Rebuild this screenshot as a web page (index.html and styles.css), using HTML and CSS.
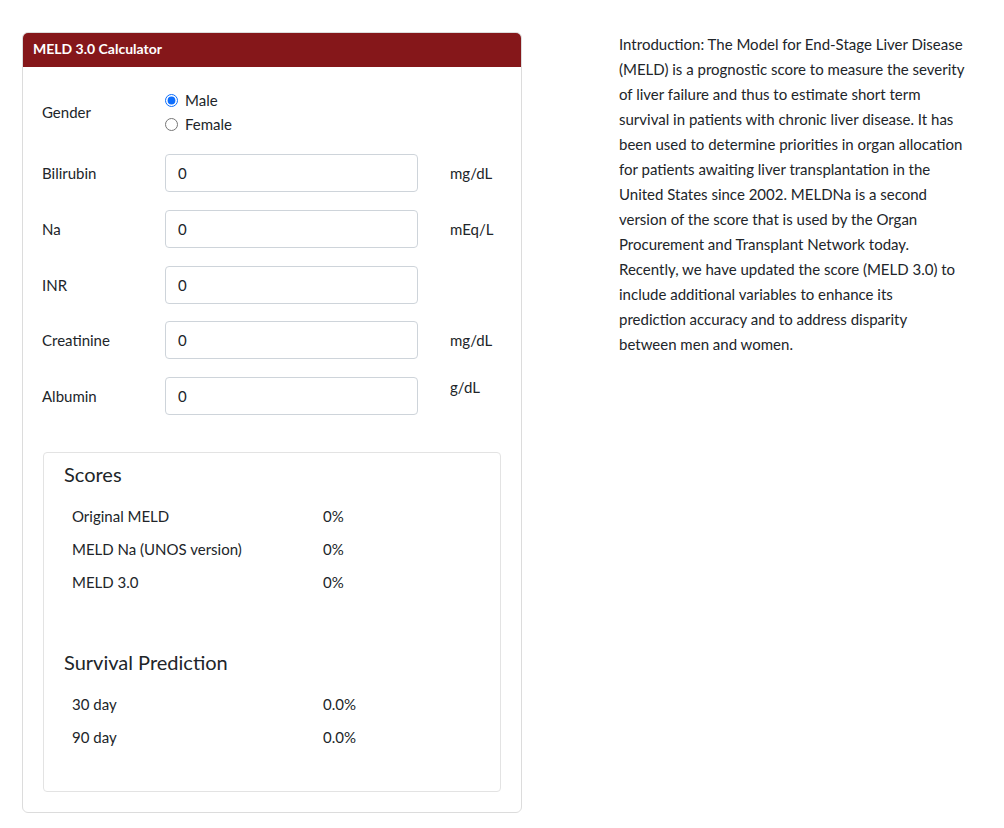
FILE: index.html
```html
<!DOCTYPE html>
<html lang="en">
<head>
<meta charset="utf-8">
<title>MELD 3.0 Calculator</title>
<link rel="stylesheet" href="styles.css">
</head>
<body>
<div class="page">
  <section class="card">
    <header class="card-header">MELD 3.0 Calculator</header>
    <div class="card-body">
      <div class="form-row gender-row">
        <div class="label">Gender</div>
        <div class="radios">
          <label class="radio"><input type="radio" name="gender" checked> Male</label>
          <label class="radio"><input type="radio" name="gender"> Female</label>
        </div>
      </div>
      <div class="form-row">
        <div class="label">Bilirubin</div>
        <input class="field" type="text" value="0">
        <div class="unit">mg/dL</div>
      </div>
      <div class="form-row">
        <div class="label">Na</div>
        <input class="field" type="text" value="0">
        <div class="unit">mEq/L</div>
      </div>
      <div class="form-row">
        <div class="label">INR</div>
        <input class="field" type="text" value="0">
        <div class="unit"></div>
      </div>
      <div class="form-row">
        <div class="label">Creatinine</div>
        <input class="field" type="text" value="0">
        <div class="unit">mg/dL</div>
      </div>
      <div class="form-row">
        <div class="label">Albumin</div>
        <input class="field" type="text" value="0">
        <div class="unit unit-top">g/dL</div>
      </div>

      <div class="results">
        <h3 class="results-title">Scores</h3>
        <div class="result-row"><span class="r-name">Original MELD</span><span class="r-val">0%</span></div>
        <div class="result-row"><span class="r-name">MELD Na (UNOS version)</span><span class="r-val">0%</span></div>
        <div class="result-row"><span class="r-name">MELD 3.0</span><span class="r-val">0%</span></div>
        <h3 class="results-title survival">Survival Prediction</h3>
        <div class="result-row"><span class="r-name">30 day</span><span class="r-val">0.0%</span></div>
        <div class="result-row"><span class="r-name">90 day</span><span class="r-val">0.0%</span></div>
      </div>
    </div>
  </section>
  <aside class="intro">
    <p>Introduction: The Model for End-Stage Liver Disease (MELD) is a prognostic score to measure the severity of liver failure and thus to estimate short term survival in patients with chronic liver disease. It has been used to determine priorities in organ allocation for patients awaiting liver transplantation in the United States since 2002. MELDNa is a second version of the score that is used by the Organ Procurement and Transplant Network today. Recently, we have updated the score (MELD 3.0) to include additional variables to enhance its prediction&nbsp;accuracy and to address disparity between men and women.</p>
  </aside>
</div>
</body>
</html>
```

FILE: styles.css
```css
* { box-sizing: border-box; }
html, body { margin: 0; padding: 0; background: #fff; }
body {
  font-family: "Lato", "Noto Sans", sans-serif;
  font-size: 15px;
  color: #212529;
}
.page {
  display: flex;
  align-items: flex-start;
  padding: 32px 0 0 22px;
}
.card {
  width: 500px;
  border: 1px solid #dcdcdc;
  border-radius: 6px;
  overflow: hidden;
  flex: none;
}
.card-header {
  background: #85171a;
  color: #fff;
  font-weight: 700;
  font-size: 14px;
  height: 35px;
  line-height: 34px;
  padding-left: 10px;
  margin-top: -1px;
}
.card-body {
  padding: 21px 20px 20px 19px;
}
.form-row {
  display: flex;
  align-items: center;
  height: 38px;
  margin-bottom: 17.75px;
}
.gender-row {
  height: 48px;
  margin-bottom: 18px;
}
.label {
  width: 123px;
  flex: none;
}
.radios {
  display: flex;
  flex-direction: column;
}
.radio {
  display: flex;
  align-items: center;
  height: 24px;
}
.radio input {
  margin: 0 7px 0 0;
  width: 13px;
  height: 13px;
  accent-color: #0d6efd;
}
.field {
  width: 253px;
  height: 38px;
  border: 1px solid #ced4da;
  border-radius: 4px;
  padding: 0 12px;
  font: inherit;
  color: #212529;
  flex: none;
}
.unit {
  margin-left: 32px;
}
.unit-top {
  align-self: flex-start;
  margin-top: 1px;
}
.results {
  margin: 37px 0 0 1px;
  border: 1px solid #e3e3e3;
  border-radius: 4px;
  padding: 9px 20px 28px 20px;
  height: 340px;
}
.results-title {
  margin: 0 0 13px 0;
  font-size: 20px;
  font-weight: 400;
  line-height: 24px;
}
.results-title.survival {
  margin-top: 52px;
}
.result-row {
  display: flex;
  height: 33px;
  align-items: center;
  padding-left: 8px;
}
.r-name { width: 251px; }
.intro {
  margin-left: 97px;
  width: 347px;
  line-height: 25px;
}
.intro p { margin: 0; }
```
